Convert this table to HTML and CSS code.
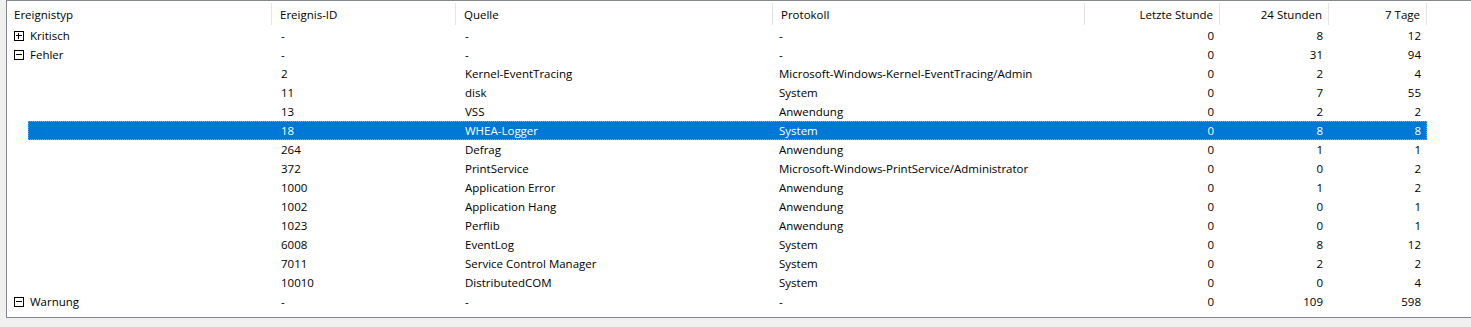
FILE: index.html
```html
<!DOCTYPE html>
<html lang="de">

<head>
    <meta charset="UTF-8">
    <meta name="viewport" content="width=device-width, initial-scale=1.0">
    <title>Zusammenfassung der administrativen Ereignisse</title>
    <link rel="stylesheet" href="styles.css">
</head>

<body>
    <div class="list-view">
        <div class="list-header">
            <div class="col-head">Ereignistyp</div>
            <div class="col-head">Ereignis-ID</div>
            <div class="col-head">Quelle</div>
            <div class="col-head">Protokoll</div>
            <div class="col-head num">Letzte Stunde</div>
            <div class="col-head num">24 Stunden</div>
            <div class="col-head num">7 Tage</div>
        </div>

        <div class="row">
            <div class="indent"><span class="expander plus"></span></div>
            <div class="item">
                <span class="cell first">Kritisch</span>
                <span class="cell">-</span>
                <span class="cell">-</span>
                <span class="cell">-</span>
                <span class="cell num">0</span>
                <span class="cell num">8</span>
                <span class="cell num">12</span>
            </div>
        </div>
        <div class="row">
            <div class="indent"><span class="expander minus"></span></div>
            <div class="item">
                <span class="cell first">Fehler</span>
                <span class="cell">-</span>
                <span class="cell">-</span>
                <span class="cell">-</span>
                <span class="cell num">0</span>
                <span class="cell num">31</span>
                <span class="cell num">94</span>
            </div>
        </div>
        <div class="row">
            <div class="indent"></div>
            <div class="item">
                <span class="cell first"></span>
                <span class="cell">2</span>
                <span class="cell">Kernel-EventTracing</span>
                <span class="cell">Microsoft-Windows-Kernel-EventTracing/Admin</span>
                <span class="cell num">0</span>
                <span class="cell num">2</span>
                <span class="cell num">4</span>
            </div>
        </div>
        <div class="row">
            <div class="indent"></div>
            <div class="item">
                <span class="cell first"></span>
                <span class="cell">11</span>
                <span class="cell">disk</span>
                <span class="cell">System</span>
                <span class="cell num">0</span>
                <span class="cell num">7</span>
                <span class="cell num">55</span>
            </div>
        </div>
        <div class="row">
            <div class="indent"></div>
            <div class="item">
                <span class="cell first"></span>
                <span class="cell">13</span>
                <span class="cell">VSS</span>
                <span class="cell">Anwendung</span>
                <span class="cell num">0</span>
                <span class="cell num">2</span>
                <span class="cell num">2</span>
            </div>
        </div>
        <div class="row">
            <div class="indent"></div>
            <div class="item selected">
                <span class="cell first"></span>
                <span class="cell">18</span>
                <span class="cell">WHEA-Logger</span>
                <span class="cell">System</span>
                <span class="cell num">0</span>
                <span class="cell num">8</span>
                <span class="cell num">8</span>
            </div>
        </div>
        <div class="row">
            <div class="indent"></div>
            <div class="item">
                <span class="cell first"></span>
                <span class="cell">264</span>
                <span class="cell">Defrag</span>
                <span class="cell">Anwendung</span>
                <span class="cell num">0</span>
                <span class="cell num">1</span>
                <span class="cell num">1</span>
            </div>
        </div>
        <div class="row">
            <div class="indent"></div>
            <div class="item">
                <span class="cell first"></span>
                <span class="cell">372</span>
                <span class="cell">PrintService</span>
                <span class="cell">Microsoft-Windows-PrintService/Administrator</span>
                <span class="cell num">0</span>
                <span class="cell num">0</span>
                <span class="cell num">2</span>
            </div>
        </div>
        <div class="row">
            <div class="indent"></div>
            <div class="item">
                <span class="cell first"></span>
                <span class="cell">1000</span>
                <span class="cell">Application Error</span>
                <span class="cell">Anwendung</span>
                <span class="cell num">0</span>
                <span class="cell num">1</span>
                <span class="cell num">2</span>
            </div>
        </div>
        <div class="row">
            <div class="indent"></div>
            <div class="item">
                <span class="cell first"></span>
                <span class="cell">1002</span>
                <span class="cell">Application Hang</span>
                <span class="cell">Anwendung</span>
                <span class="cell num">0</span>
                <span class="cell num">0</span>
                <span class="cell num">1</span>
            </div>
        </div>
        <div class="row">
            <div class="indent"></div>
            <div class="item">
                <span class="cell first"></span>
                <span class="cell">1023</span>
                <span class="cell">Perflib</span>
                <span class="cell">Anwendung</span>
                <span class="cell num">0</span>
                <span class="cell num">0</span>
                <span class="cell num">1</span>
            </div>
        </div>
        <div class="row">
            <div class="indent"></div>
            <div class="item">
                <span class="cell first"></span>
                <span class="cell">6008</span>
                <span class="cell">EventLog</span>
                <span class="cell">System</span>
                <span class="cell num">0</span>
                <span class="cell num">8</span>
                <span class="cell num">12</span>
            </div>
        </div>
        <div class="row">
            <div class="indent"></div>
            <div class="item">
                <span class="cell first"></span>
                <span class="cell">7011</span>
                <span class="cell">Service Control Manager</span>
                <span class="cell">System</span>
                <span class="cell num">0</span>
                <span class="cell num">2</span>
                <span class="cell num">2</span>
            </div>
        </div>
        <div class="row">
            <div class="indent"></div>
            <div class="item">
                <span class="cell first"></span>
                <span class="cell">10010</span>
                <span class="cell">DistributedCOM</span>
                <span class="cell">System</span>
                <span class="cell num">0</span>
                <span class="cell num">0</span>
                <span class="cell num">4</span>
            </div>
        </div>
        <div class="row">
            <div class="indent"><span class="expander minus"></span></div>
            <div class="item">
                <span class="cell first">Warnung</span>
                <span class="cell">-</span>
                <span class="cell">-</span>
                <span class="cell">-</span>
                <span class="cell num">0</span>
                <span class="cell num">109</span>
                <span class="cell num">598</span>
            </div>
        </div>
    </div>
</body>

</html>
```

FILE: styles.css
```css
body {
    margin: 0;
    padding-left: 6px;
    background-color: #f0f0f0;
    font-family: "Segoe UI", "Open Sans", "Liberation Sans", Arial, sans-serif;
    font-size: 11.5px;
    color: #000;
    overflow: hidden;
}

.list-view {
    width: 1500px;
    height: 316px;
    background-color: #fff;
    border: 1px solid #828790;
    border-right: none;
}

.list-header {
    display: grid;
    grid-template-columns: 265px 184px 317px 312px 135px 109px 98px;
    height: 25px;
}

.col-head {
    display: flex;
    align-items: center;
    padding: 0 6px 0 8px;
    margin: 2px 0 1px;
    border-right: 1px solid #e5e5e5;
    white-space: nowrap;
}

.col-head:first-child {
    padding-left: 7px;
}

.col-head.num {
    justify-content: flex-end;
}

.row {
    display: flex;
    height: 19px;
}

.indent {
    width: 21px;
    flex: none;
    display: flex;
    align-items: center;
    padding-left: 7px;
    box-sizing: border-box;
}

.expander {
    position: relative;
    width: 10px;
    height: 10px;
    border: 1px solid #000;
    box-sizing: border-box;
}

.expander::before,
.expander::after {
    content: "";
    position: absolute;
    background-color: #000;
}

.expander::before {
    left: 1px;
    right: 1px;
    top: 3px;
    height: 1px;
}

.expander.plus::after {
    top: 1px;
    bottom: 1px;
    left: 3px;
    width: 1px;
}

.item {
    display: grid;
    grid-template-columns: 244px 184px 317px 312px 135px 109px 98px;
    height: 19px;
}

.cell {
    display: flex;
    align-items: center;
    padding: 0 6px 0 9px;
    white-space: nowrap;
    overflow: hidden;
}

.cell.first {
    padding-left: 2px;
}

.cell:nth-child(4) {
    padding-left: 6px;
}

.cell.num {
    justify-content: flex-end;
}

.item.selected {
    background-color: #0078d7;
    color: #fff;
    outline: 1px dotted #f08a24;
    outline-offset: -1px;
}
```
